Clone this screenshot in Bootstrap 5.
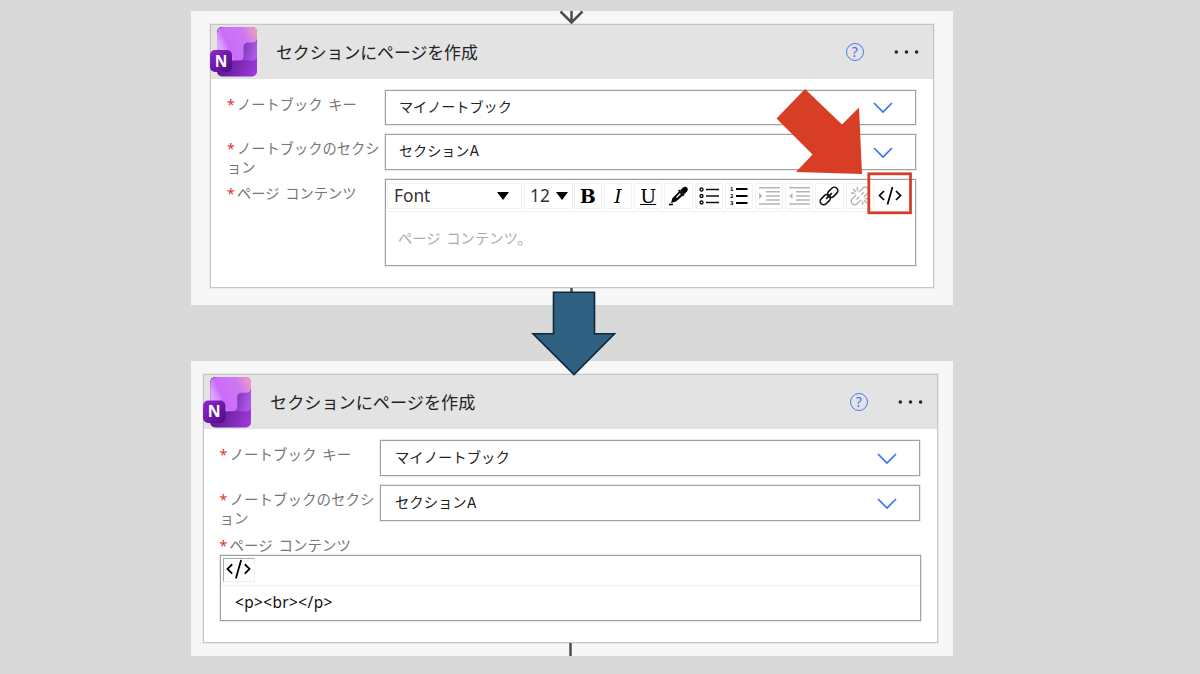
<!DOCTYPE html>
<html lang="ja">
<head>
<meta charset="utf-8">
<meta name="viewport" content="width=device-width, initial-scale=1">
<title>セクションにページを作成</title>
<link rel="stylesheet" href="https://cdn.jsdelivr.net/npm/bootstrap@5.3.0/dist/css/bootstrap.min.css">
<style>
  body { background: #d9d9d9; font-family: "Noto Sans", "Noto Sans CJK JP", sans-serif; color: #222; height: 674px; overflow: hidden; }
  svg { display: block; flex: none; }
  .jp { font-family: "Noto Sans CJK JP", sans-serif; }
  .stage { width: 762px; margin-left: 191px; padding-top: 11px; }
  .panel { background: #f7f7f7; }
  .panel-a { height: 293.5px; padding: 13px 19px 0 18.5px; margin-bottom: 56px; }
  .panel-b { height: 295.5px; padding: 13.5px 15px 0 11.5px; }
  .step { background: #fff; border: 1px solid #c6c6c6; box-shadow: 0 0 0 1px rgba(190,190,190,.25); }
  .panel-a .step { height: 263.5px; }
  .panel-b .step { height: 269px; }
  .step-head { background: #e3e3e3; height: 54px; }
  .onenote-icon { margin-left: -.5px; margin-top: -1px; }
  .step-title { font-size: 16.85px; line-height: 24px; margin-left: 19px; }
  .panel-b .step-title { font-size: 17.15px; }
  .help-ring { width: 18.5px; height: 18.5px; border: 1.3px solid #4a7cf3; border-radius: 50%; color: #3f74f2; font-size: 14px; line-height: 1; margin-right: 30px; }
  .dots { width: 25px; margin-right: 14px; }
  .step-body { padding: 10.5px 17px 0 16.5px; }
  .panel-b .step-body { padding: 11px 17.5px 0 16px; }
  .field-row { height: 44.7px; }
  .panel-b .field-row { height: 45.4px; }
  .field-label { width: 158px; font-size: 14.25px; line-height: 18.5px; color: #767676; padding-top: 5px; word-spacing: 2.5px; flex: none; white-space: nowrap; }
  .panel-b .field-label { width: 160.5px; font-size: 14.5px; line-height: 19px; padding-top: 4px; }
  .req { color: #e0322c; display: inline-block; width: 10px; font: 400 14px/12px "Noto Sans", sans-serif; word-spacing: 0; }
  .select-box { height: 35.5px; border: 1px solid #a0a0a0; box-shadow: 0 0 0 1px rgba(170,170,170,.25); padding: 0 22px 0 13px; font-size: 14.1px; }
  .select-box span { margin-top: -2px; }
  .select-box svg { margin-top: 2px; }
  .select-box .latin { font-family: Inter, sans-serif; }
  .panel-b .select-box { font-size: 14.35px; padding-left: 14px; }
  .editor { border: 1px solid #a0a0a0; box-shadow: 0 0 0 1px rgba(170,170,170,.25); }
  .editor-a { height: 86.5px; margin-top: .5px; }
  .editor-b { height: 66.5px; margin-right: -1px; margin-top: 1px; }
  .toolbar { height: 32px; border-bottom: 1.5px solid #f1f1f1; padding: 3px 0 0 1px; }
  .editor-b .toolbar { height: 30.5px; padding-top: 2px; }
  .tool { height: 26px; width: 28.2px; margin-right: 2.02px; border: 1.2px solid #f1f1f1; border-radius: 2px; flex: none; color: #000; }
  .tool-font { width: 134.5px; padding: 0 12px 0 6px; font-size: 17.3px; color: #333; }
  .tool-size { width: 49px; padding: 0 4px 0 5.5px; font-size: 17.3px; color: #333; margin-right: 1.2px; }
  .tool-letter { font-family: "DejaVu Serif", serif; font-size: 19px; line-height: 1; }
  .caret { width: 0; height: 0; border: 6px solid transparent; border-top: 8px solid #000; border-bottom: 0; }
  .placeholder-text { color: #a9abb6; font-size: 14.3px; word-spacing: 2.5px; padding: 15px 0 0 12px; }
  .code-toggle { width: 32px; height: 24px; margin-left: 1px; border: 1px solid #ededed; border-top-color: #aaa; border-left-color: #aaa; }
  .code-text { font-size: 15.4px; letter-spacing: .4px; line-height: 22px; color: #111; padding: 6px 0 0 14.5px; }
  .overlay { position: absolute; left: 0; top: 0; pointer-events: none; }
</style>
</head>
<body class="position-relative">

<svg width="0" height="0" class="position-absolute">
  <defs>
    <linearGradient id="gPage" x1="0" y1="0.4" x2="1" y2="0"><stop offset="0" stop-color="#dca8ff"/><stop offset=".2" stop-color="#c96cf8"/><stop offset=".65" stop-color="#cf78f4"/><stop offset="1" stop-color="#eda6b8"/></linearGradient>
    <linearGradient id="gBase" x1="0.2" y1="0.6" x2="1" y2="1"><stop offset="0" stop-color="#5b1a94"/><stop offset="1" stop-color="#a53be0"/></linearGradient>
    <linearGradient id="gTab" x1="0" y1="0" x2="1" y2="0.3"><stop offset="0" stop-color="#6f2fae"/><stop offset="1" stop-color="#ae5ae8"/></linearGradient>
    <linearGradient id="gBadge" x1="0" y1="0" x2="1" y2="1"><stop offset="0" stop-color="#9425d6"/><stop offset="1" stop-color="#4c0b7d"/></linearGradient>
    <symbol id="onenote" viewBox="0 0 47 51">
      <rect x="7" y="1" width="40" height="49.500" rx="5" fill="url(#gBase)"/>
      <path d="M30 34.500V20q0-4 5-4h12v14q0 4.500-4.500 4.500z" fill="url(#gTab)"/>
      <path d="M7 34.500V8q0-7 7-7h28q5 0 5 5v6q0 4.500-4.500 4.500H38q-4.500 0-4.500 4.500v9q0 4.500-4.500 4.500z" fill="url(#gPage)"/>
      <rect x="0" y="24" width="22" height="22" rx="5" fill="url(#gBadge)"/>
      <text x="11" y="40.500" text-anchor="middle" font-family="Open Sans, sans-serif" font-weight="700" font-size="15.500" fill="#fff">N</text>
    </symbol>
    <symbol id="chevron" viewBox="0 0 20 12"><path d="M1 1l9 9 9-9" fill="none" stroke="#3b72f4" stroke-width="1.700"/></symbol>
    <symbol id="more" viewBox="0 0 25 6"><g fill="#262626"><circle cx="2.300" cy="3" r="1.800"/><circle cx="12.500" cy="3" r="1.800"/><circle cx="22.600" cy="3" r="1.800"/></g></symbol>
    <symbol id="code" viewBox="0 0 24 20"><path d="M6 5L1.500 9.500 6 14M18 5l4.500 4.500L18 14M14.500 1L9.500 18.500" fill="none" stroke="#000" stroke-width="1.700"/></symbol>
  </defs>
</svg>

<main class="stage">
  <section class="panel panel-a">
    <div class="step">
      <header class="step-head d-flex align-items-center">
        <svg class="onenote-icon" width="47" height="51"><use href="#onenote"/></svg>
        <div class="step-title jp flex-grow-1">セクションにページを作成</div>
        <div class="help-ring d-flex align-items-center justify-content-center">?</div>
        <svg class="dots" height="6"><use href="#more"/></svg>
      </header>
      <div class="step-body">
        <div class="field-row d-flex align-items-start">
          <div class="field-label jp"><span class="req">*</span>ノートブック キー</div>
          <div class="select-box jp flex-grow-1 d-flex align-items-center justify-content-between"><span>マイノートブック</span><svg width="20" height="12"><use href="#chevron"/></svg></div>
        </div>
        <div class="field-row d-flex align-items-start">
          <div class="field-label jp"><span class="req">*</span>ノートブックのセクシ<br>ョン</div>
          <div class="select-box jp flex-grow-1 d-flex align-items-center justify-content-between"><span>セクション<span class="latin">A</span></span><svg width="20" height="12"><use href="#chevron"/></svg></div>
        </div>
        <div class="d-flex align-items-start">
          <div class="field-label jp"><span class="req">*</span>ページ コンテンツ</div>
          <div class="editor editor-a flex-grow-1">
            <div class="toolbar d-flex">
              <div class="tool tool-font d-flex align-items-center justify-content-between">Font<span class="caret"></span></div>
              <div class="tool tool-size d-flex align-items-center justify-content-between">12<span class="caret"></span></div>
              <div class="tool tool-letter d-flex align-items-center justify-content-center fw-bold">B</div>
              <div class="tool tool-letter d-flex align-items-center justify-content-center fst-italic">I</div>
              <div class="tool tool-letter d-flex align-items-center justify-content-center text-decoration-underline">U</div>
              <div class="tool d-flex align-items-center justify-content-center">
                <svg width="20" height="20" viewBox="0 0 20 20"><path d="M3 17l1.500-5 7-7 4 4-7.500 6.500z" fill="#000"/><path d="M8.500 11.500l4-4" stroke="#fff" stroke-width="1.200"/><path d="M12 4.500l3-3q2.500-1.500 4 0t0 4L16 8.500z" fill="#000"/><path d="M10.500 4l5.500 5.500" stroke="#000" stroke-width="1.500"/><path d="M1 18.500h4" stroke="#000" stroke-width="1.600"/></svg>
              </div>
              <div class="tool d-flex align-items-center justify-content-center">
                <svg width="20" height="20" viewBox="0 0 20 20"><g fill="none" stroke="#111" stroke-width="1.400"><circle cx="2.500" cy="3.500" r="1.500"/><circle cx="2.500" cy="10" r="1.500"/><circle cx="2.500" cy="16.500" r="1.500"/><path d="M7 3.500h13M7 10h13M7 16.500h13"/></g></svg>
              </div>
              <div class="tool d-flex align-items-center justify-content-center">
                <svg width="18" height="20" viewBox="0 0 18 20"><path d="M6 3h11.500M6 10h11.500M6 17h11.500" stroke="#000" stroke-width="2"/><g font-family="DejaVu Sans, sans-serif" font-weight="700" font-size="5"><text x="0" y="5">1</text><text x="0" y="12">2</text><text x="0" y="19">3</text></g></svg>
              </div>
              <div class="tool d-flex align-items-center justify-content-center">
                <svg width="21" height="20" viewBox="0 0 21 20"><path d="M0 1.800h21M7 5.800h14M7 9.900h14M7 14h14M0 18h21" stroke="#b5b5b5" stroke-width="1.500"/><path d="M0 7l3.500 3L0 13z" fill="#b5b5b5"/></svg>
              </div>
              <div class="tool d-flex align-items-center justify-content-center">
                <svg width="21" height="20" viewBox="0 0 21 20"><path d="M0 1.800h21M7 5.800h14M7 9.900h14M7 14h14M0 18h21" stroke="#b5b5b5" stroke-width="1.500"/><path d="M3.500 7L0 10l3.500 3z" fill="#b5b5b5"/></svg>
              </div>
              <div class="tool d-flex align-items-center justify-content-center">
                <svg width="20" height="20" viewBox="0 0 20 20"><g transform="rotate(-45 10 10)" fill="none" stroke="#111" stroke-width="1.600"><rect x="-1" y="6.500" width="11.500" height="7" rx="3.500"/><rect x="9.500" y="6.500" width="11.500" height="7" rx="3.500"/><path d="M6 10h8"/></g></svg>
              </div>
              <div class="tool d-flex align-items-center justify-content-center">
                <svg width="20" height="20" viewBox="0 0 20 20"><g fill="none" stroke="#b0b0b0" stroke-width="1.300"><g transform="rotate(-45 10 10)"><path d="M8 6.500H2.500a3.500 3.500 0 0 0 0 7H8M12 6.500h5.500a3.500 3.500 0 0 1 0 7H12M5 10h4M11.500 10h4"/></g><path d="M7 1l.7 4M3 3l3 3M1 7l4 .5M13 19l-.7-4M17 17l-3-3M19 13l-4-.5"/></g></svg>
              </div>
              <div class="tool border-0 d-flex align-items-center justify-content-center">
                <svg width="24" height="20"><use href="#code"/></svg>
              </div>
            </div>
            <div class="placeholder-text jp">ページ コンテンツ。</div>
          </div>
        </div>
      </div>
    </div>
  </section>

  <section class="panel panel-b">
    <div class="step">
      <header class="step-head d-flex align-items-center">
        <svg class="onenote-icon" width="48" height="52"><use href="#onenote"/></svg>
        <div class="step-title jp flex-grow-1">セクションにページを作成</div>
        <div class="help-ring d-flex align-items-center justify-content-center">?</div>
        <svg class="dots" height="6"><use href="#more"/></svg>
      </header>
      <div class="step-body">
        <div class="field-row d-flex align-items-start">
          <div class="field-label jp"><span class="req">*</span>ノートブック キー</div>
          <div class="select-box jp flex-grow-1 d-flex align-items-center justify-content-between"><span>マイノートブック</span><svg width="20" height="12"><use href="#chevron"/></svg></div>
        </div>
        <div class="field-row d-flex align-items-start">
          <div class="field-label jp"><span class="req">*</span>ノートブックのセクシ<br>ョン</div>
          <div class="select-box jp flex-grow-1 d-flex align-items-center justify-content-between"><span>セクション<span class="latin">A</span></span><svg width="20" height="12"><use href="#chevron"/></svg></div>
        </div>
        <div class="field-label jp"><span class="req">*</span>ページ コンテンツ</div>
        <div class="editor editor-b">
          <div class="toolbar">
            <div class="code-toggle d-flex align-items-center justify-content-center"><svg width="27" height="21"><use href="#code"/></svg></div>
          </div>
          <div class="code-text">&lt;p&gt;&lt;br&gt;&lt;/p&gt;</div>
        </div>
      </div>
    </div>
  </section>
</main>

<!-- flow connectors and callout shapes drawn over the panels -->
<svg class="overlay" width="1200" height="674" viewBox="0 0 1200 674">
  <path d="M571.500 11v12M560.500 11.500l11 11 11-11" fill="none" stroke="#4d4d4d" stroke-width="2.500"/>
  <path d="M571.500 288v5M570.500 643v13" stroke="#4d4d4d" stroke-width="2.500"/>
  <path d="M553.500 292.300h41v41.500h20L574 374.500l-41-40.700h20.500z" fill="#2f5f81" stroke="#10283a" stroke-width="1.600"/>
  <path d="M805 89l37 35.500 17-17L862 174l-66-2 16.500-17.500L776.500 118.500z" fill="#d83e25"/>
  <rect x="868.800" y="173.800" width="41.700" height="39" fill="none" stroke="#d83e25" stroke-width="2.800"/>
</svg>
<script src="https://cdn.jsdelivr.net/npm/bootstrap@5.3.0/dist/js/bootstrap.bundle.min.js"></script>
</body>
</html>
